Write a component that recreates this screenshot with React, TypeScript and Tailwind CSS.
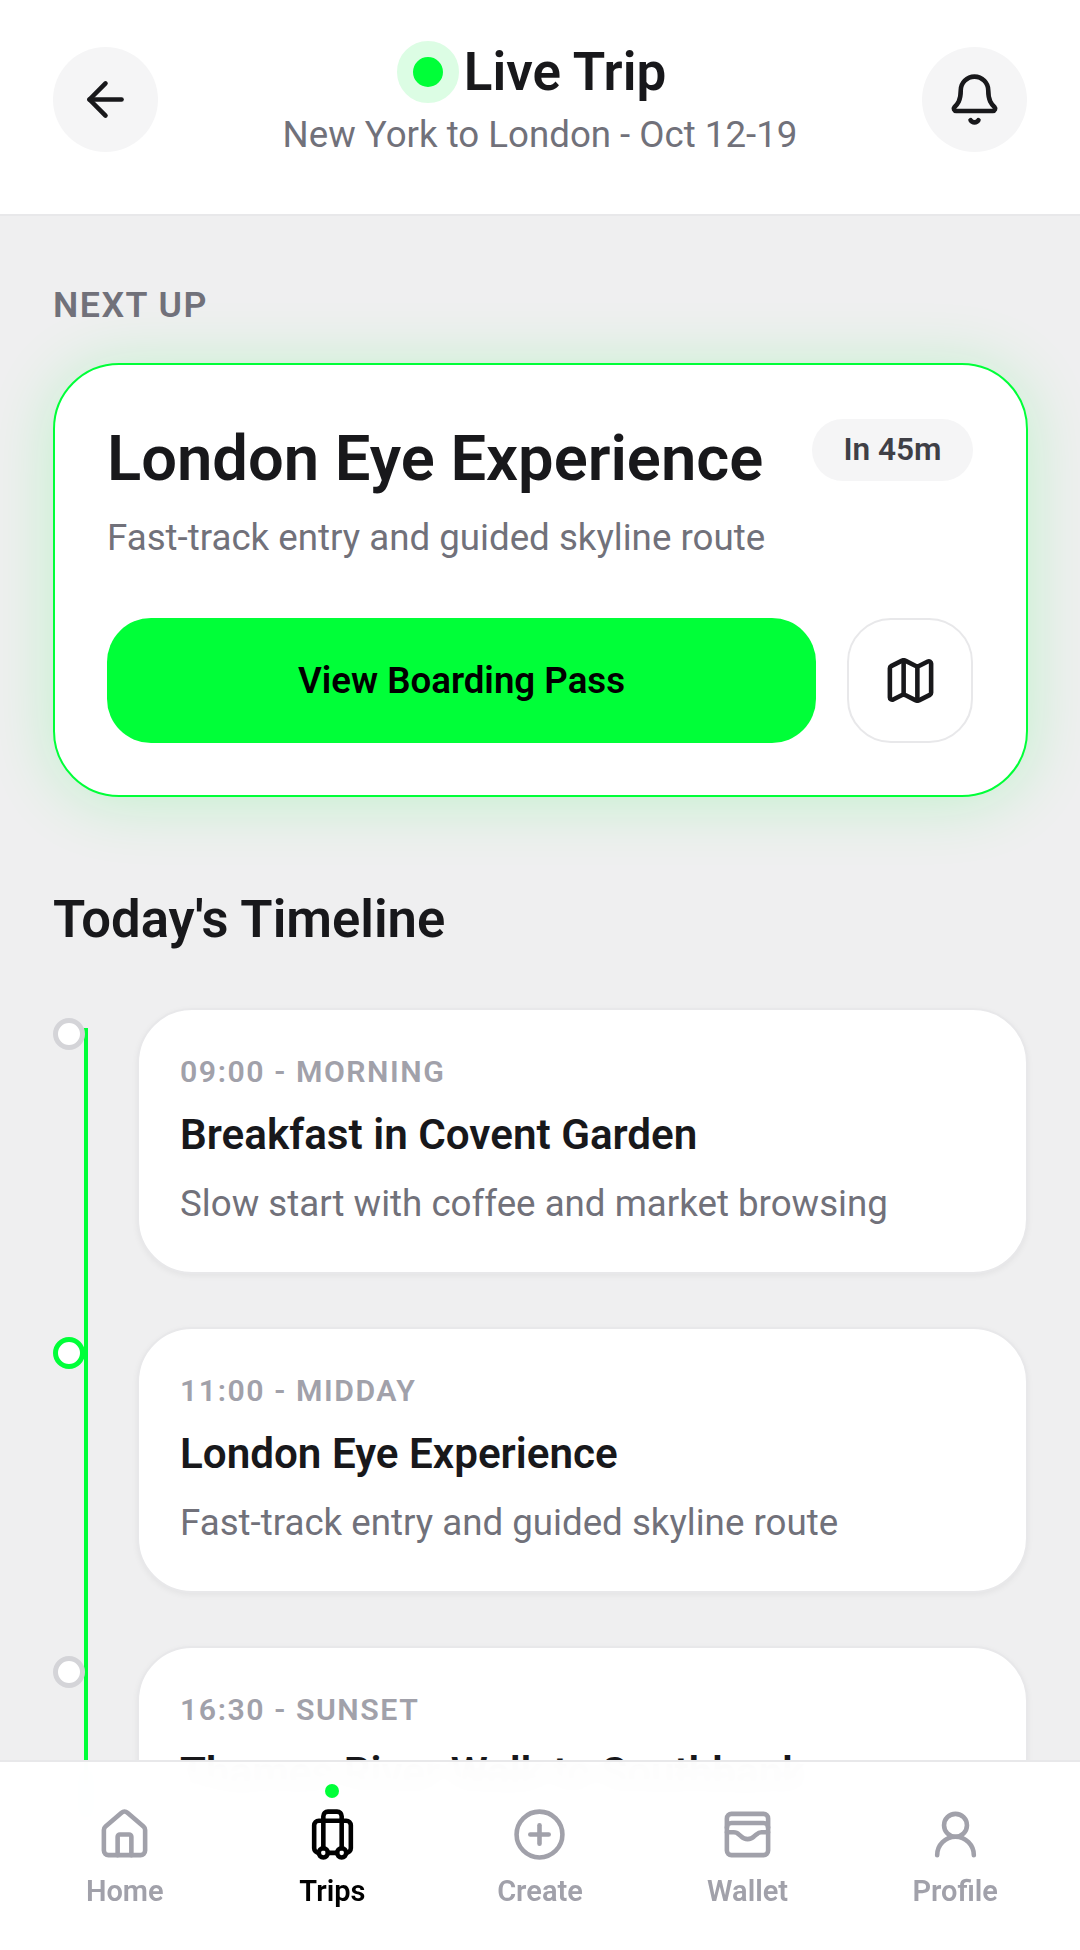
import { ArrowLeft, Bell, CirclePlus, House, Luggage, Map, UserRound, WalletCards } from "lucide-react";

const timeline = [
  {
    time: "09:00 - MORNING",
    title: "Breakfast in Covent Garden",
    desc: "Slow start with coffee and market browsing",
    active: false,
  },
  {
    time: "11:00 - MIDDAY",
    title: "London Eye Experience",
    desc: "Fast-track entry and guided skyline route",
    active: true,
  },
  {
    time: "16:30 - SUNSET",
    title: "Thames River Walk to Southbank",
    desc: "Golden hour stroll along the river",
    active: false,
  },
];

const tabs = [
  { label: "Home", icon: House },
  { label: "Trips", icon: Luggage, active: true },
  { label: "Create", icon: CirclePlus },
  { label: "Wallet", icon: WalletCards },
  { label: "Profile", icon: UserRound },
];

export default function App() {
  return (
    <div className="relative flex h-[1950px] w-[1080px] flex-col overflow-hidden bg-[#efeff0] font-['Roboto',sans-serif] text-[#18181b]">
      {/* Header */}
      <header className="flex h-[216px] shrink-0 items-start justify-between border-b-2 border-[#e8e8ea] bg-white px-[53px] pt-[47px]">
        <button className="flex h-[105px] w-[105px] items-center justify-center rounded-full bg-[#f5f5f6]">
          <ArrowLeft className="h-[55px] w-[55px]" strokeWidth={2} />
        </button>
        <div className="-mt-[6px] flex flex-col items-center">
          <div className="mr-[17px] flex items-center gap-[5px]">
            <span className="h-[62px] w-[62px] rounded-full border-[16px] border-[#dcfde4] bg-[#00ff38]" />
            <h1 className="text-[53px] font-semibold leading-[62px]">Live Trip</h1>
          </div>
          <p className="mt-[10px] text-[36.67px] leading-[44px] text-[#71717a]">New York to London - Oct 12-19</p>
        </div>
        <button className="flex h-[105px] w-[105px] items-center justify-center rounded-full bg-[#f5f5f6]">
          <Bell className="h-[55px] w-[55px]" strokeWidth={2} />
        </button>
      </header>

      <main className="flex-1 pl-[53px] pr-[52px] pt-[69px]">
        <h2 className="text-[35.75px] font-semibold leading-[40px] tracking-[1.5px] text-[#71717a]">NEXT UP</h2>

        {/* Next up card */}
        <section className="mt-[38px] rounded-[66px] border-2 border-[#00ff38] bg-white py-[52px] pl-[52px] pr-[53px] shadow-[0_4px_66px_rgba(0,255,56,0.2)]">
          <div className="flex items-start justify-between">
            <h3 className="text-[63.25px] font-semibold leading-[82px]">London Eye Experience</h3>
            <span className="mt-[2px] flex h-[62px] w-[161px] items-center justify-center rounded-full bg-[#f5f5f6] text-[31.6px] font-semibold text-[#3f3f46]">
              In 45m
            </span>
          </div>
          <p className="mt-[15px] text-[36.7px] leading-[48px] text-[#71717a]">Fast-track entry and guided skyline route</p>
          <div className="mt-[56px] flex gap-[31px]">
            <button className="flex h-[125px] flex-1 items-center justify-center rounded-[44px] bg-[#00ff38] text-[36.67px] font-semibold text-black">
              View Boarding Pass
            </button>
            <button className="flex h-[125px] w-[126px] items-center justify-center rounded-[44px] border-2 border-[#e8e8ea] bg-white">
              <Map className="h-[55px] w-[55px]" strokeWidth={2} />
            </button>
          </div>
        </section>

        <h2 className="mt-[91px] text-[52.6px] font-semibold leading-[62px]">Today's Timeline</h2>

        {/* Timeline */}
        <div className="relative mt-[58px] flex flex-col gap-[53px] pl-[84px]">
          <div className="absolute left-[31px] top-[20px] h-[800px] w-[4px] bg-[#00ff38]" />
          {timeline.map((item) => (
            <div key={item.time} className="relative">
              <span
                className={
                  item.active
                    ? "absolute -left-[84px] top-[10px] h-[32px] w-[32px] rounded-full border-[5px] border-[#00ff38] bg-white"
                    : "absolute -left-[84px] top-[10px] h-[32px] w-[32px] rounded-full border-[5px] border-[#d4d4d8] bg-white"
                }
              />
              <article className="h-[266px] rounded-[55px] border-2 border-[#e8e8ea] bg-white px-[41px] pt-[42px] shadow-[0_2px_6px_rgba(0,0,0,0.05)]">
                <p className="text-[30.25px] font-semibold leading-[40px] tracking-[1.55px] text-[#a1a1aa]">{item.time}</p>
                <h4 className="mt-[15px] text-[42.2px] font-semibold leading-[56px]">{item.title}</h4>
                <p className="mt-[17px] text-[36.7px] leading-[48px] text-[#71717a]">{item.desc}</p>
              </article>
            </div>
          ))}
        </div>
      </main>

      {/* Bottom navigation */}
      <nav className="absolute inset-x-0 bottom-0 grid h-[190px] grid-cols-5 border-t-2 border-[#e8e8ea] bg-white/[0.98] px-[21px] backdrop-blur-md">
        {tabs.map((tab) => {
          const Icon = tab.icon;
          return (
            <a
              key={tab.label}
              className={
                tab.active
                  ? "relative flex flex-col items-center pt-[45px] text-black"
                  : "relative flex flex-col items-center pt-[45px] text-[#a1a1aa]"
              }
            >
              {tab.active && <span className="absolute top-[22px] h-[14px] w-[14px] rounded-full bg-[#00ff38]" />}
              <Icon className="h-[55px] w-[55px]" strokeWidth={2} />
              <span className="mt-[9px] text-[29px] font-semibold leading-[40px]">{tab.label}</span>
            </a>
          );
        })}
      </nav>
    </div>
  );
}
